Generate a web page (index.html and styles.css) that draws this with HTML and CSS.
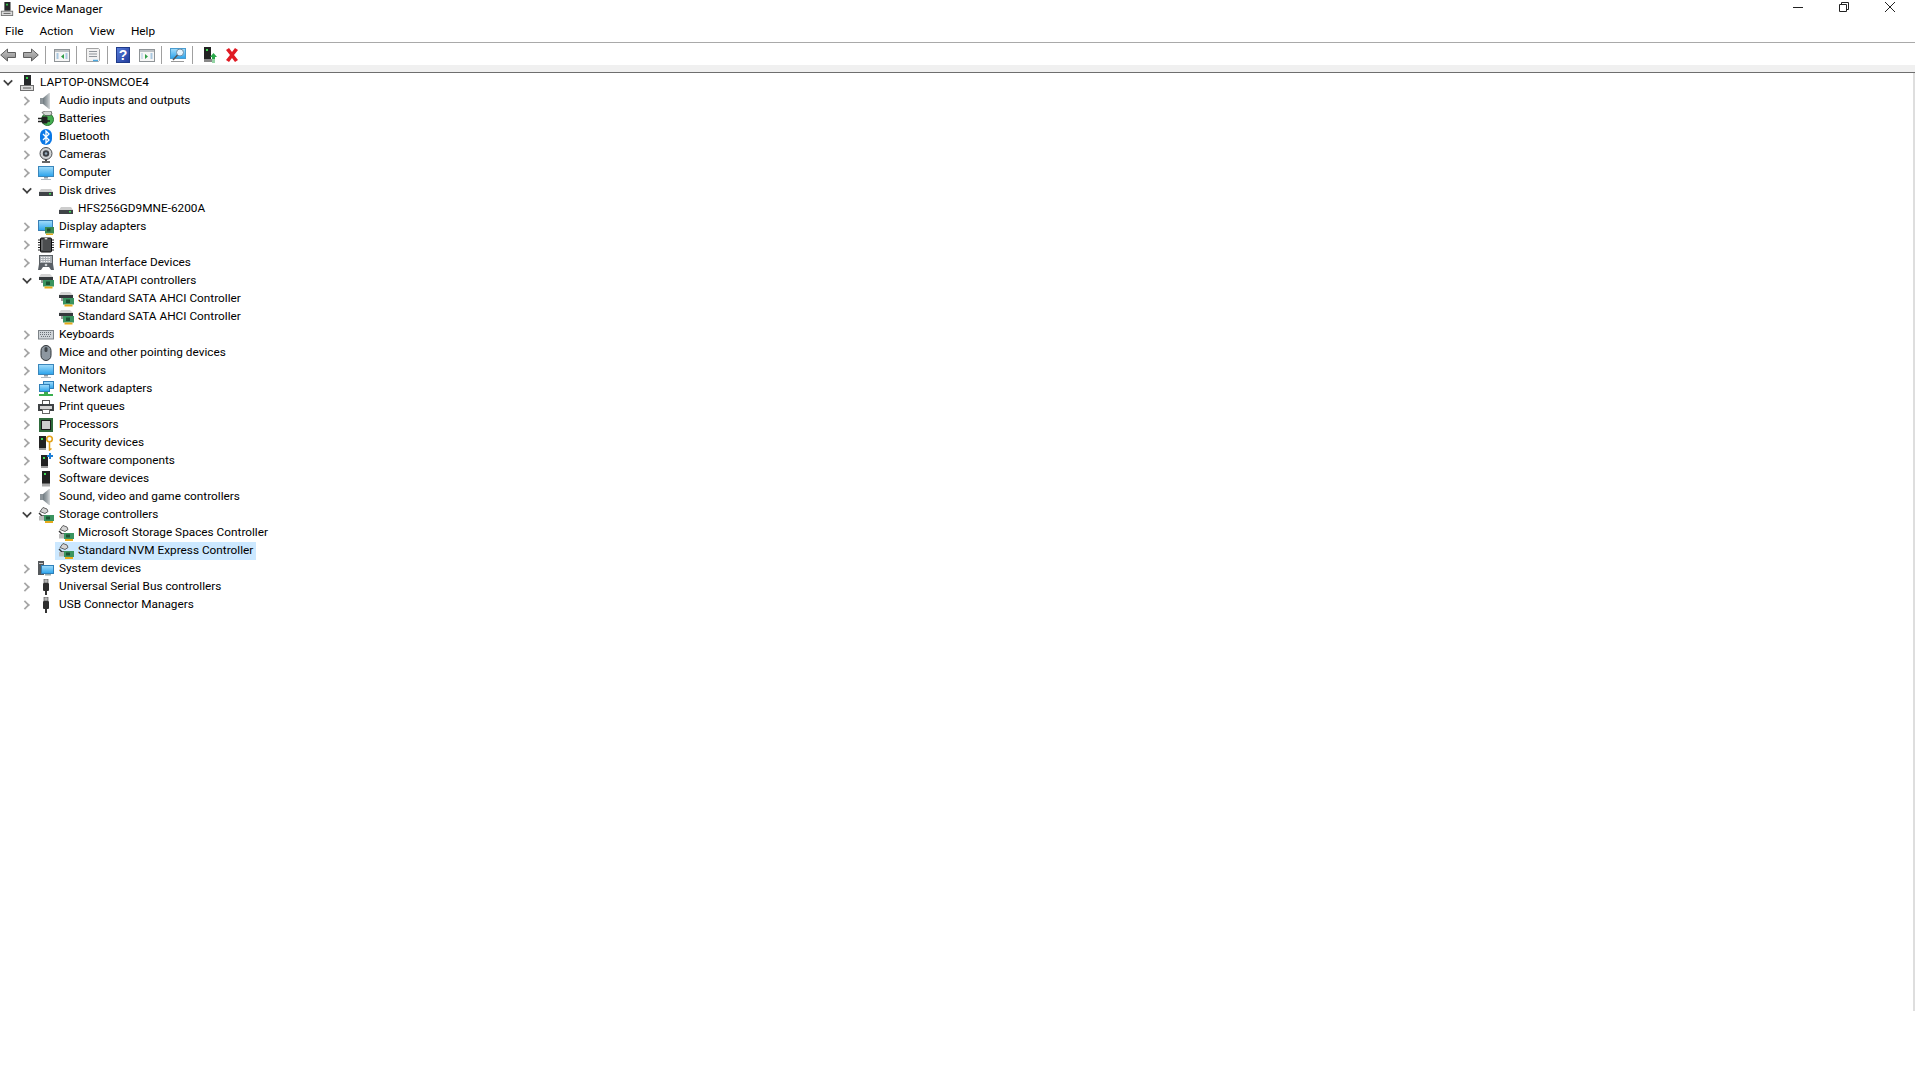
FILE: index.html
```html
<!DOCTYPE html>
<html lang="en">
<head>
  <meta charset="UTF-8">
  <title>Device Manager</title>
  <link rel="stylesheet" href="styles.css">
</head>
<body>
  <svg class="sprites" width="0" height="0">
    <defs>
      <linearGradient id="g-speaker" x1="0" x2="1" y1="0" y2="0"><stop offset="0" stop-color="#6f7a80"/><stop offset=".6" stop-color="#a4abaf"/><stop offset="1" stop-color="#d6d9db"/></linearGradient>
      <linearGradient id="g-screen" x1="0" x2="0" y1="0" y2="1"><stop offset="0" stop-color="#a5defb"/><stop offset="1" stop-color="#2aa3ec"/></linearGradient>
      <linearGradient id="g-arrow" x1="0" x2="0" y1="0" y2="1"><stop offset="0" stop-color="#c4c4c4"/><stop offset="1" stop-color="#8a8a8a"/></linearGradient>
      <linearGradient id="g-help" x1="0" x2="1" y1="0" y2="1"><stop offset="0" stop-color="#5a7fdc"/><stop offset="1" stop-color="#1f3a9a"/></linearGradient>
      <symbol id="i-tower" viewBox="0 0 16 16"><rect x="5" y="0" width="7" height="10" fill="#26282a"/><rect x="7" y="2" width="2" height="2" fill="#35d04a"/><rect x="1.500" y="10.500" width="13" height="5" fill="#dcdcdc" stroke="#6f6f6f"/><rect x="4" y="12.500" width="8" height="1" fill="#555"/></symbol>
      <symbol id="i-speaker" viewBox="0 0 16 16"><path d="M2 5h3v6H2z" fill="#8b9398"/><path d="M5 5l6-5h1v16h-1l-6-5z" fill="url(#g-speaker)"/></symbol>
      <symbol id="i-battery" viewBox="0 0 16 16"><circle cx="9.500" cy="8.500" r="6" fill="#45ad50" stroke="#2a7434"/><path d="M4 1.500l3-1.500h6l1 3-2 1.500H7z" fill="#d4d8d4" stroke="#444" stroke-width=".7"/><path d="M0 7.500h5M0 10.500h5" stroke="#222" stroke-width="1.300"/><rect x="4" y="5.500" width="5.500" height="7" rx="1" fill="#222"/><path d="M9 10h3" stroke="#1b1b1b" stroke-width="1.500"/></symbol>
      <symbol id="i-bluetooth" viewBox="0 0 16 16"><rect x="2" y="0" width="12" height="16" rx="6" fill="#0a78e6"/><path d="M5 5l6 6-3 3V2l3 3-6 6" fill="none" stroke="#fff" stroke-width="1.300"/></symbol>
      <symbol id="i-camera" viewBox="0 0 16 16"><circle cx="8" cy="6.500" r="6" fill="#d0d3d5" stroke="#4c4f52"/><circle cx="8" cy="6.500" r="3.200" fill="#3a3f45"/><circle cx="8" cy="6.500" r="1.300" fill="#93a7b8"/><path d="M8 12.500v1.500" stroke="#444" stroke-width="2"/><path d="M4 15h8" stroke="#333" stroke-width="1.500"/></symbol>
      <symbol id="i-monitor" viewBox="0 0 16 16"><rect x=".5" y="1.500" width="15" height="10" fill="url(#g-screen)" stroke="#3a86bb"/><path d="M6 12h4v1.500H6z" fill="#8f9aa3"/><path d="M3 14h10v1H3z" fill="#b2bbc3"/></symbol>
      <symbol id="i-disk" viewBox="0 0 16 16"><path d="M3 6h10l2 3H1z" fill="#cdcdcd"/><rect x="1" y="9" width="14" height="4" fill="#3f4347"/><rect x="11" y="10" width="2" height="1.500" fill="#3fdc54"/></symbol>
      <symbol id="i-display" viewBox="0 0 16 16"><rect x=".5" y="1.500" width="14" height="10" fill="url(#g-screen)" stroke="#3a7fb5"/><rect x="7" y="8" width="9" height="6.500" fill="#3a8a52"/><rect x="8" y="14.500" width="7" height="1.500" fill="#e4b020"/><rect x="9" y="9.500" width="3.500" height="3" fill="#1f4f30"/></symbol>
      <symbol id="i-chip" viewBox="0 0 16 16"><rect x="2.500" y="1" width="11" height="14" rx="1" fill="#4b4d4f" stroke="#0c0c0c"/><path d="M6.500 1a1.500 1.500 0 0 0 3 0z" fill="#ddd"/><path d="M4 3v10" stroke="#8a8c8e"/><path d="M0 3h2M0 5.500h2M0 8h2M0 10.500h2M0 13h2M14 3h2M14 5.500h2M14 8h2M14 10.500h2M14 13h2" stroke="#222"/></symbol>
      <symbol id="i-hid" viewBox="0 0 16 16"><rect x="1.500" y=".5" width="13" height="8" fill="#a9aeb3" stroke="#5a5f63"/><path d="M3 2.500h10M3 4.500h10M3 6.500h10" stroke="#f2f2f2" stroke-dasharray="1.500 1"/><path d="M0 15l1-6h14l1 6h-3l-2-3H5l-2 3z" fill="#5a6066"/><circle cx="8" cy="10" r="1.300" fill="#d0d3d5"/></symbol>
      <symbol id="i-ide" viewBox="0 0 16 16"><path d="M3 1h9l3 3H1z" fill="#d4d4d4"/><rect x="1" y="4" width="14" height="3" fill="#35393c"/><rect x="3" y="7" width="3" height="3" fill="#9a9a9a"/><rect x="5" y="7" width="11" height="6.500" fill="#3a9460"/><rect x="8" y="8.500" width="4" height="3.500" fill="#1c5233"/><rect x="6.500" y="13.500" width="8" height="2" fill="#e7ab1c"/></symbol>
      <symbol id="i-keyboard" viewBox="0 0 16 16"><rect x=".5" y="3.500" width="15" height="8.500" fill="#cfd4d8" stroke="#7d8388"/><path d="M2 5.500h12M2 7.500h12M3 9.500h10" stroke="#6a7076" stroke-dasharray="1 1"/></symbol>
      <symbol id="i-mouse" viewBox="0 0 16 16"><rect x="3" y=".5" width="10" height="15" rx="5" fill="#8d97a0" stroke="#2f3438"/><rect x="6.500" y="2" width="3" height="5" rx="1.500" fill="#3f4549"/></symbol>
      <symbol id="i-network" viewBox="0 0 16 16"><rect x="5.500" y=".5" width="10" height="7" fill="url(#g-screen)" stroke="#2f7fb8"/><rect x="1.500" y="3.500" width="10" height="7" fill="url(#g-screen)" stroke="#2f7fb8"/><path d="M1 14h14" stroke="#3aae4e" stroke-width="2"/><path d="M6 11h4v2H6z" fill="#3aae4e"/></symbol>
      <symbol id="i-printer" viewBox="0 0 16 16"><rect x="4.500" y="1.500" width="7" height="4" fill="#fff" stroke="#555"/><path d="M0 5h16v7H0z" fill="#3f4245"/><rect x="2" y="7" width="12" height="3" fill="#d4d4d4"/><rect x="4.500" y="10.500" width="7" height="4" fill="#fff" stroke="#666"/></symbol>
      <symbol id="i-cpu" viewBox="0 0 16 16"><rect x="1" y="1" width="14" height="14" fill="#2f6b3c"/><rect x="3.500" y="3.500" width="9" height="9" fill="#cdcdcd" stroke="#1a1a1a"/></symbol>
      <symbol id="i-key" viewBox="0 0 16 16"><rect x="1" y="1" width="7" height="14" fill="#222"/><rect x="3" y="3" width="2" height="2" fill="#3fdc54"/><rect x="1" y="13" width="7" height="2" fill="#999"/><circle cx="11.500" cy="4" r="2.800" fill="none" stroke="#e3a21a" stroke-width="1.600"/><path d="M11.500 7v8l2-1.500" fill="none" stroke="#e3a21a" stroke-width="1.500"/></symbol>
      <symbol id="i-comp" viewBox="0 0 16 16"><rect x="3" y="2" width="7" height="13" fill="#222"/><rect x="5" y="4" width="2" height="2" fill="#3fdc54"/><rect x="3" y="13" width="7" height="2" fill="#999"/><path d="M11 0h2v2h2v2h-2v2h-2V4H9V2h2z" fill="#1f7fd6"/></symbol>
      <symbol id="i-sw" viewBox="0 0 16 16"><rect x="4" y="0" width="8" height="15" fill="#222"/><rect x="6" y="2" width="2" height="2" fill="#3fdc54"/><rect x="4" y="12.500" width="8" height="3" fill="#aaa"/></symbol>
      <symbol id="i-storage" viewBox="0 0 16 16"><path d="M5 .5l4 1.500 1 2.500-3 2-5-2z" fill="#d4d4d4" stroke="#444" stroke-width=".8"/><path d="M1 6l3 3h3" fill="none" stroke="#333" stroke-width="1.400"/><rect x="1" y="9" width="6" height="4.500" fill="#bbb"/><rect x="6" y="8" width="10" height="6" fill="#3a9460"/><rect x="8" y="9.500" width="4" height="3" fill="#1c5233"/><rect x="7" y="14" width="8" height="2" fill="#e7ab1c"/></symbol>
      <symbol id="i-system" viewBox="0 0 16 16"><rect x="0" y="0" width="6" height="14" fill="#55595c"/><rect x="1" y="2" width="4" height="1" fill="#ccc"/><rect x="3.500" y="4.500" width="12" height="8" fill="url(#g-screen)" stroke="#2f7fb8"/><path d="M7 13h6v1.500H7z" fill="#9aa"/></symbol>
      <symbol id="i-usb" viewBox="0 0 16 16"><rect x="6" y="0" width="4" height="4" fill="#b5b5b5" stroke="#444" stroke-width=".6"/><rect x="5" y="4" width="6" height="8" rx="1" fill="#2d2d2d"/><rect x="7" y="12" width="2" height="4" fill="#333"/></symbol>
    </defs>
  </svg>

  <div class="window">
    <div class="titlebar">
      <svg class="app-icon"><use href="#i-tower"/></svg>
      <span class="title">Device Manager</span>
      <div class="caption">
        <svg class="cap-btn" viewBox="0 0 12 12"><path d="M1 6.500h10" stroke="#222"/></svg>
        <svg class="cap-btn" viewBox="0 0 12 12"><path d="M1.500 3.500h7v7h-7zM3.500 3V1.500h7v7H9" fill="none" stroke="#222"/></svg>
        <svg class="cap-btn" viewBox="0 0 12 12"><path d="M1 1l10 10M11 1 1 11" stroke="#222"/></svg>
      </div>
    </div>

    <div class="menubar">
      <span>File</span><span>Action</span><span>View</span><span>Help</span>
    </div>

    <div class="toolbar">
      <svg class="arrow" viewBox="0 0 16 16"><path d="M.7 8l6.800-6v3.500h8v5h-8V14z" fill="url(#g-arrow)" stroke="#5f5f5f"/></svg>
      <svg class="arrow" viewBox="0 0 16 16"><path d="M15.300 8 8.500 2v3.500h-8v5h8V14z" fill="url(#g-arrow)" stroke="#5f5f5f"/></svg>
      <i class="sep"></i>
      <svg class="tool" viewBox="0 0 16 16"><rect x=".5" y="2.500" width="15" height="12" fill="#f6f6f6" stroke="#8f9497"/><path d="M1 3h14v2H1z" fill="#bcc1c5"/><path d="M10 7v5L7 9.500z" fill="#2f9e46"/><path d="M2.500 7h2M2.500 9h2M2.500 11h2M11.500 7h2M11.500 9h2M11.500 11h2" stroke="#5f9bcb"/></svg>
      <i class="sep"></i>
      <svg class="tool" viewBox="0 0 16 16"><path d="M1.500 1.500h12l1 1v11l-1 1h-12z" fill="#f2f2f2" stroke="#a3a3a3"/><path d="M4 4.500h8M4 7h8M4 9.500h8" stroke="#8f959b"/><path d="M8 13.500h5" stroke="#4aa8e0" stroke-width="1.500"/></svg>
      <i class="sep"></i>
      <svg class="tool help" viewBox="0 0 16 16"><rect x="1.500" y=".5" width="13" height="15" fill="url(#g-help)" stroke="#1e3a8a"/><text x="8" y="13" text-anchor="middle" class="help-q">?</text></svg>
      <svg class="tool" viewBox="0 0 16 16"><rect x=".5" y="2.500" width="15" height="12" fill="#f6f6f6" stroke="#8f9497"/><path d="M1 3h14v2H1z" fill="#bcc1c5"/><path d="M6 7v5l3-2.500z" fill="#2f9e46"/><path d="M2.500 7h1M2.500 9h1M2.500 11h1M11.500 7h2M11.500 9h2M11.500 11h2" stroke="#5f9bcb"/></svg>
      <i class="sep"></i>
      <svg class="tool" viewBox="0 0 16 16"><rect x=".5" y="1.500" width="15" height="10" fill="url(#g-screen)" stroke="#4a9ccf"/><circle cx="10" cy="5.500" r="3.500" fill="#e4f3fc" stroke="#6e8fa8"/><path d="M7.500 8 3 13" stroke="#555" stroke-width="1.400"/><path d="M1 14.500h13" stroke="#999"/></svg>
      <i class="sep"></i>
      <svg class="tool" viewBox="0 0 16 16"><rect x="3" y="0" width="7" height="12" fill="#222"/><rect x="5" y="2" width="2" height="2" fill="#3fdc54"/><rect x="3" y="12" width="8" height="3" fill="#888"/><path d="M12.500 6l3.500 4h-2v2h-3v-2H9z" fill="#2aa84a"/><path d="M11 13h3M11 15h3" stroke="#2aa84a"/></svg>
      <svg class="tool remove" viewBox="0 0 16 16"><path d="M2 3l3-2 3 4 3-4 3 2-4 5 4 5-3 2-3-4-3 4-3-2 4-5z" fill="#e01b24"/></svg>
    </div>

    <div class="strip"></div>

    <div class="tree-pane">
      <ul class="tree">
        <li class="row root"><i class="twisty open"></i><svg class="ico"><use href="#i-tower"/></svg><span>LAPTOP-0NSMCOE4</span></li>
        <li class="row"><i class="twisty"></i><svg class="ico"><use href="#i-speaker"/></svg><span>Audio inputs and outputs</span></li>
        <li class="row"><i class="twisty"></i><svg class="ico"><use href="#i-battery"/></svg><span>Batteries</span></li>
        <li class="row"><i class="twisty"></i><svg class="ico"><use href="#i-bluetooth"/></svg><span>Bluetooth</span></li>
        <li class="row"><i class="twisty"></i><svg class="ico"><use href="#i-camera"/></svg><span>Cameras</span></li>
        <li class="row"><i class="twisty"></i><svg class="ico"><use href="#i-monitor"/></svg><span>Computer</span></li>
        <li class="row"><i class="twisty open"></i><svg class="ico"><use href="#i-disk"/></svg><span>Disk drives</span></li>
        <li class="row child"><svg class="ico"><use href="#i-disk"/></svg><span>HFS256GD9MNE-6200A</span></li>
        <li class="row"><i class="twisty"></i><svg class="ico"><use href="#i-display"/></svg><span>Display adapters</span></li>
        <li class="row"><i class="twisty"></i><svg class="ico"><use href="#i-chip"/></svg><span>Firmware</span></li>
        <li class="row"><i class="twisty"></i><svg class="ico"><use href="#i-hid"/></svg><span>Human Interface Devices</span></li>
        <li class="row"><i class="twisty open"></i><svg class="ico"><use href="#i-ide"/></svg><span>IDE ATA/ATAPI controllers</span></li>
        <li class="row child"><svg class="ico"><use href="#i-ide"/></svg><span>Standard SATA AHCI Controller</span></li>
        <li class="row child"><svg class="ico"><use href="#i-ide"/></svg><span>Standard SATA AHCI Controller</span></li>
        <li class="row"><i class="twisty"></i><svg class="ico"><use href="#i-keyboard"/></svg><span>Keyboards</span></li>
        <li class="row"><i class="twisty"></i><svg class="ico"><use href="#i-mouse"/></svg><span>Mice and other pointing devices</span></li>
        <li class="row"><i class="twisty"></i><svg class="ico"><use href="#i-monitor"/></svg><span>Monitors</span></li>
        <li class="row"><i class="twisty"></i><svg class="ico"><use href="#i-network"/></svg><span>Network adapters</span></li>
        <li class="row"><i class="twisty"></i><svg class="ico"><use href="#i-printer"/></svg><span>Print queues</span></li>
        <li class="row"><i class="twisty"></i><svg class="ico"><use href="#i-cpu"/></svg><span>Processors</span></li>
        <li class="row"><i class="twisty"></i><svg class="ico"><use href="#i-key"/></svg><span>Security devices</span></li>
        <li class="row"><i class="twisty"></i><svg class="ico"><use href="#i-comp"/></svg><span>Software components</span></li>
        <li class="row"><i class="twisty"></i><svg class="ico"><use href="#i-sw"/></svg><span>Software devices</span></li>
        <li class="row"><i class="twisty"></i><svg class="ico"><use href="#i-speaker"/></svg><span>Sound, video and game controllers</span></li>
        <li class="row"><i class="twisty open"></i><svg class="ico"><use href="#i-storage"/></svg><span>Storage controllers</span></li>
        <li class="row child"><svg class="ico"><use href="#i-storage"/></svg><span>Microsoft Storage Spaces Controller</span></li>
        <li class="row child selected"><svg class="ico"><use href="#i-storage"/></svg><span>Standard NVM Express Controller</span></li>
        <li class="row"><i class="twisty"></i><svg class="ico"><use href="#i-system"/></svg><span>System devices</span></li>
        <li class="row"><i class="twisty"></i><svg class="ico"><use href="#i-usb"/></svg><span>Universal Serial Bus controllers</span></li>
        <li class="row"><i class="twisty"></i><svg class="ico"><use href="#i-usb"/></svg><span>USB Connector Managers</span></li>
      </ul>
    </div>
  </div>
</body>
</html>
```

FILE: styles.css
```css
html, body {
  margin: 0;
  height: 100%;
  background: #fff;
}

body {
  font-family: Roboto, sans-serif;
  font-size: 11.8px;
  color: #000;
  overflow: hidden;
}

.sprites {
  position: absolute;
}

.window {
  width: 1920px;
}

.titlebar {
  display: flex;
  align-items: center;
  height: 18px;
}

.app-icon {
  width: 14px;
  height: 16px;
  margin-right: 4px;
}

.title {
  flex: 1;
}

.caption {
  display: flex;
  gap: 34px;
  padding-right: 24px;
  margin-top: -4px;
}

.cap-btn {
  width: 12px;
  height: 12px;
}

.menubar {
  display: flex;
  gap: 16px;
  align-items: center;
  height: 25px;
  padding: 2px 5px 0;
  box-sizing: border-box;
  border-bottom: 1px solid #a9a9a9;
  margin-right: 5px;
}

.toolbar {
  display: flex;
  align-items: center;
  height: 22px;
  padding-top: 2px;
  box-sizing: border-box;
}

.tool {
  width: 16px;
  height: 16px;
  margin: 0 6px 0 8px;
}

.tool.help {
  margin: 0 0 0 7px;
}

.tool.remove {
  margin-left: 1px;
}

.arrow {
  width: 16px;
  height: 16px;
  margin-right: 7px;
}

.arrow + .sep {
  margin-left: -1px;
}

.sep {
  width: 1px;
  height: 18px;
  background: #a0a0a0;
}

.help-q {
  font-family: "Liberation Sans", sans-serif;
  font-size: 14px;
  font-weight: bold;
  fill: #fff;
}

.strip {
  height: 7px;
  background: #f0f0f0;
  border-bottom: 1px solid #6e6e6e;
  margin-right: 5px;
}

.tree-pane {
  height: 938px;
  margin-right: 5px;
  border-right: 2px solid #dedede;
}

.tree {
  list-style: none;
  margin: 0;
  padding: 1px 0 0;
}

.row {
  display: flex;
  align-items: center;
  height: 18px;
  padding-left: 19px;
}

.row.root {
  padding-left: 0;
}

.row.child {
  padding-left: 58px;
}

.row.selected {
  margin-left: 55px;
  padding: 0 3px;
  width: fit-content;
  background: #cce8ff;
}

.row span {
  padding-left: 4px;
  line-height: 16px;
  margin-bottom: 2px;
}

.twisty {
  width: 16px;
  height: 16px;
  margin-right: 3px;
  position: relative;
}

.twisty + .ico {
  margin-right: 1px;
}

.twisty::before {
  content: "";
  position: absolute;
  left: 2px;
  top: 4px;
  width: 6px;
  height: 6px;
  border-top: 2px solid #a6a6a6;
  border-right: 2px solid #a6a6a6;
  box-sizing: content-box;
  transform: rotate(45deg) scale(.85);
}

.twisty.open::before {
  border-color: #404040;
  left: 4px;
  top: 2px;
  transform: rotate(135deg) scale(.85);
}

.ico {
  width: 16px;
  height: 16px;
  flex: none;
}
```
